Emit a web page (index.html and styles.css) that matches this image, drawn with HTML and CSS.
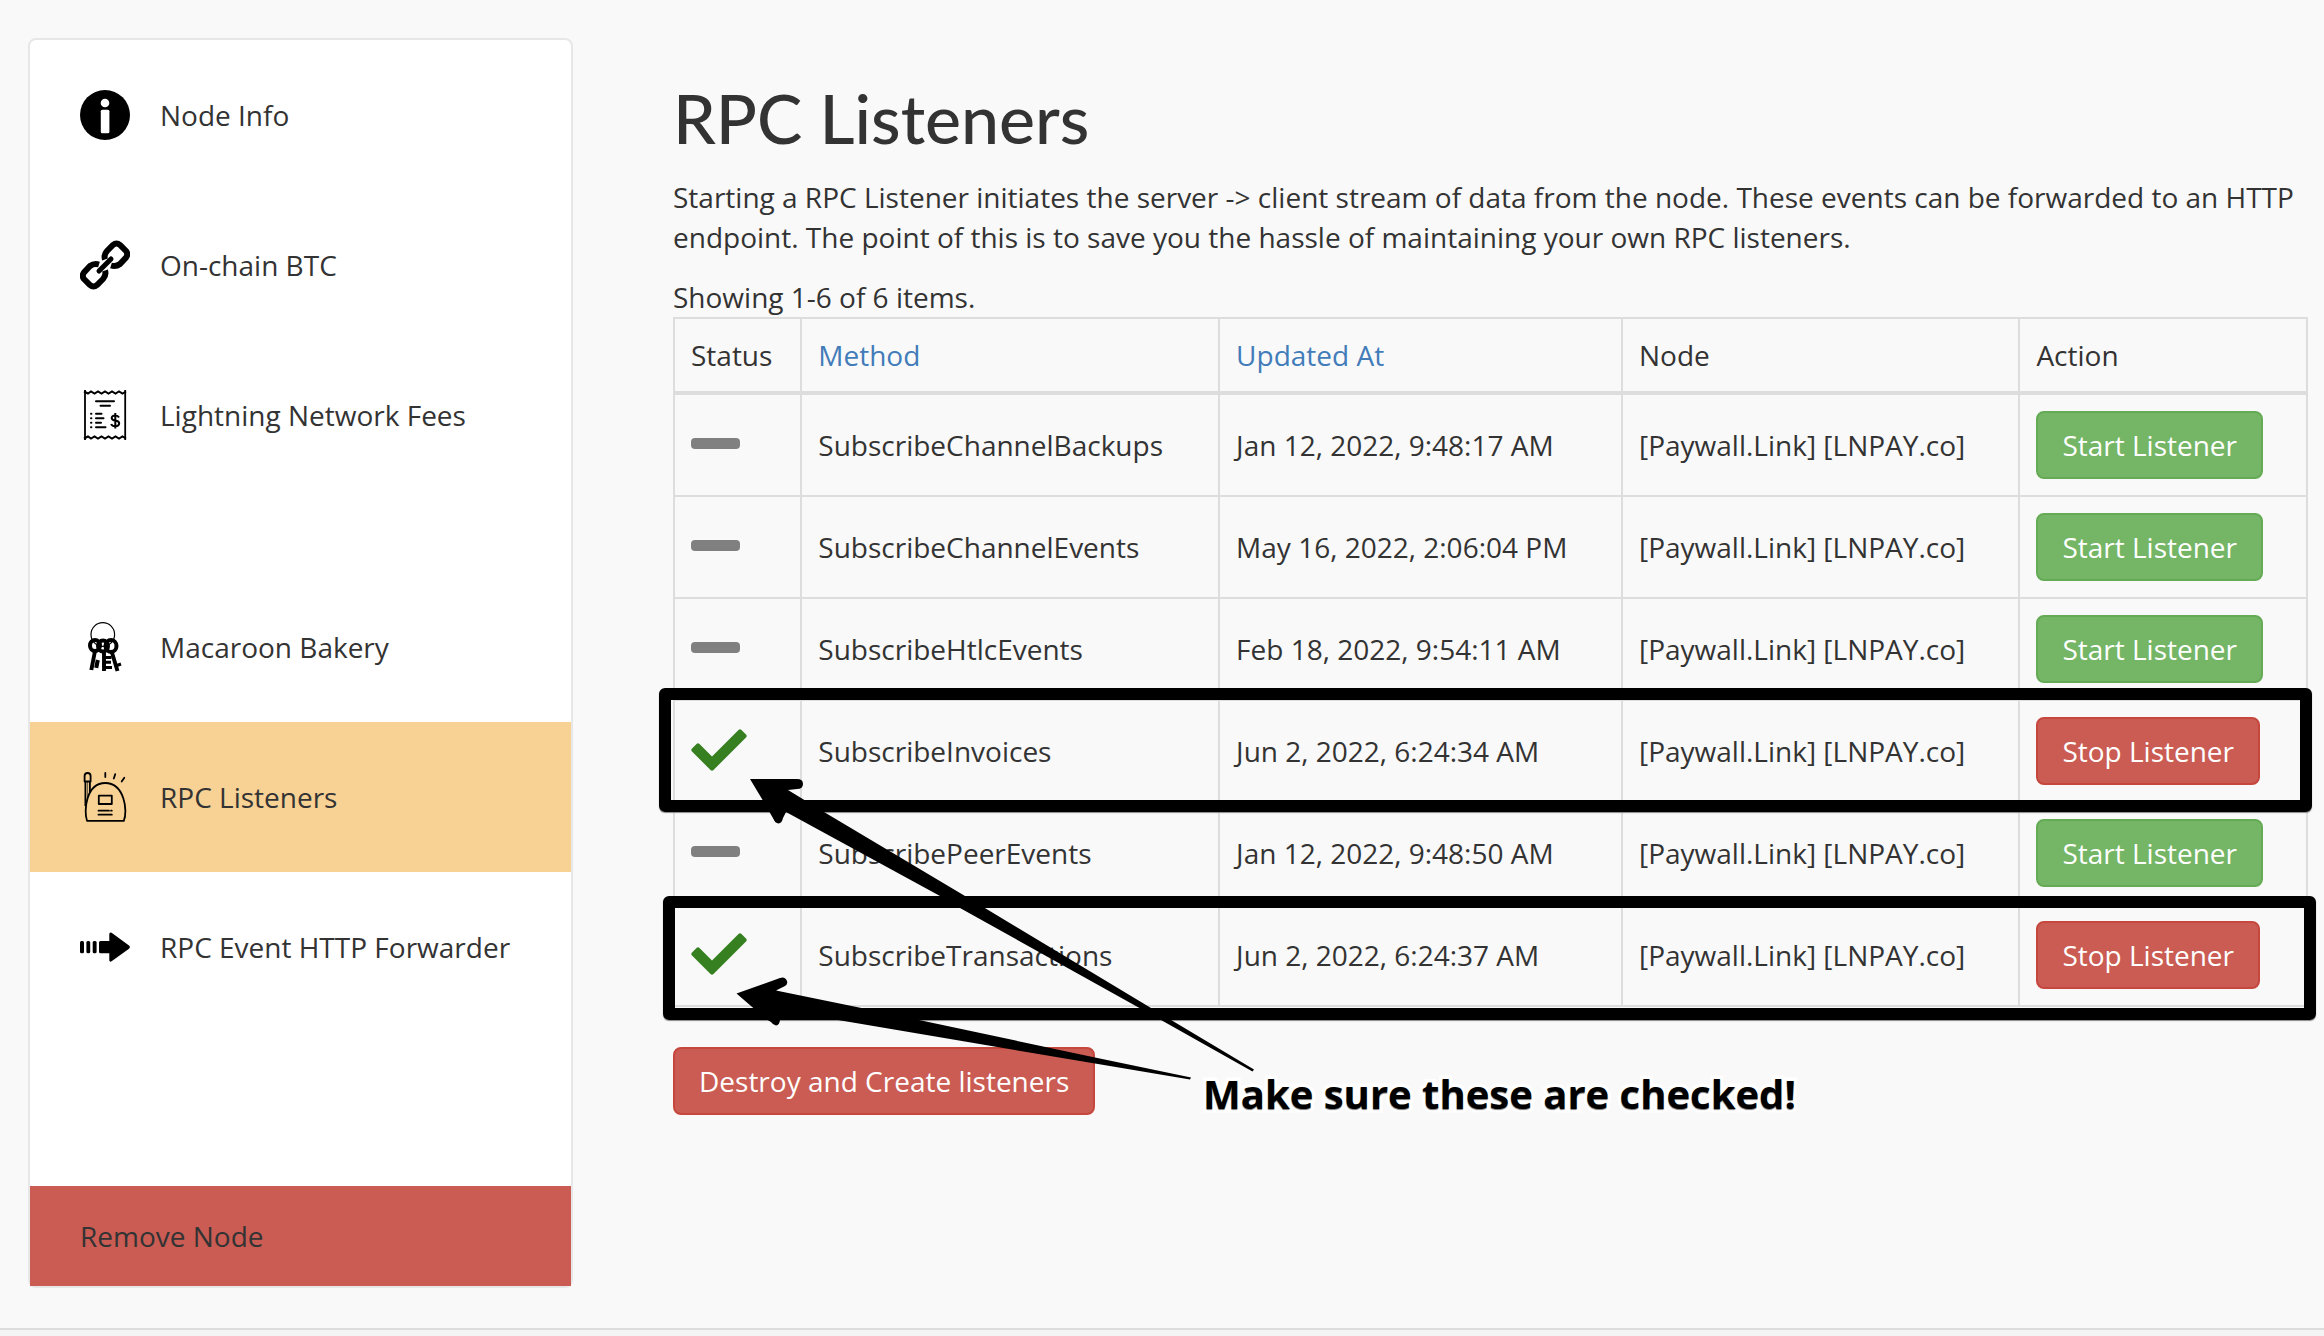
FILE: index.html
```html
<!DOCTYPE html>
<html lang="en">
<head>
<meta charset="utf-8">
<meta name="viewport" content="width=device-width, initial-scale=1">
<title>RPC Listeners</title>
<link rel="stylesheet" href="styles.css">
</head>
<body>
<div class="layout">
  <nav class="sidebar">
    <a class="nav-item" href="#info">
      <svg class="nav-icon" viewBox="0 0 50 50" aria-hidden="true"><circle cx="25" cy="25" r="25"/><g fill="#fff"><circle cx="25" cy="13" r="4.3"/><rect x="20.8" y="19.8" width="8.6" height="23.4" rx="1.5"/></g></svg>
      Node Info
    </a>
    <a class="nav-item" href="#onchain">
      <svg class="nav-icon" viewBox="0 0 50 50" aria-hidden="true"><g fill="none" stroke="#000" stroke-width="6"><path d="M25 19.500Q23.500 15 27 11L33 5Q36.500 2 40 5L46 11Q48.500 14 46 17.500L40 24Q36 27 31 25.500"/><path transform="rotate(180 25 25)" d="M25 19.500Q23.500 15 27 11L33 5Q36.500 2 40 5L46 11Q48.500 14 46 17.500L40 24Q36 27 31 25.500"/><path d="M31 19L19 31" stroke-width="5" stroke-linecap="round"/></g></svg>
      On-chain BTC
    </a>
    <a class="nav-item nav-item-spaced" href="#fees">
      <svg class="nav-icon" viewBox="0 0 50 50" aria-hidden="true"><g fill="none" stroke="#000" stroke-width="2"><path d="M5 0V50M45.200 0V50" stroke-width="1.800"/><path d="M4 1.500L8 3.500L11 1.500L14.500 3.500L18 1.500L21.500 3.500L25 1.500L28.500 3.500L32 1.500L35.500 3.500L39 1.500L42.500 3.500L46 1.500M4 48.500L8 46.500L11 48.500L14.500 46.500L18 48.500L21.500 46.500L25 48.500L28.500 46.500L32 48.500L35.500 46.500L39 48.500L42.500 46.500L46 48.500"/><path d="M16 11.300H34M20.500 15.700H30M16 23.800H21.500M16 28.300H23.500M16 32.800H21M16 37.300H25.500M11 23.800H11.400M11 28.300H11.400M11 32.800H11.400M11 37.300H11.400" stroke-linecap="round"/><path d="M39 27.500Q38 25.500 35.300 25.500Q31.500 25.500 31.700 28.200Q32 30.300 35.300 30.600Q39.200 31 39.200 33.500Q39 36.200 35.300 36.200Q32 36.200 31.200 34M35.300 23V38.500"/></g></svg>
      Lightning Network Fees
    </a>
    <a class="nav-item" href="#macaroons">
      <svg class="nav-icon" viewBox="0 0 50 50" aria-hidden="true"><g fill="none" stroke="#000"><circle cx="22.800" cy="12.500" r="11.800" stroke-width="1.200"/><g stroke-width="4"><ellipse cx="15" cy="23.500" rx="5" ry="5.500"/><ellipse cx="23" cy="24" rx="5" ry="5.500"/><ellipse cx="31" cy="24" rx="5.500" ry="6"/></g><path d="M15 29L11.300 48M24 29V49M31.500 29L37.500 49" stroke-width="3.900"/><path d="M15 41.500L19 42.300" stroke-width="8"/><path d="M24 35.500H31.500M24 40.300H31M24 45.500H32M35.500 44L41 42" stroke-width="3"/></g></svg>
      Macaroon Bakery
    </a>
    <a class="nav-item nav-item-active" href="#listeners" aria-current="page">
      <svg class="nav-icon" viewBox="0 0 50 50" aria-hidden="true"><g fill="none" stroke="#000" stroke-width="1.800" stroke-linejoin="round"><path d="M7 48.800C3.500 39 6 11 25.200 11C44.500 11 48 39 43.800 48.800Z"/><path d="M4.600 9.500V4Q4.600 1 7.600 1Q10.600 1 10.600 4V9.500ZM5.400 9.500V34M9.900 9.500V21"/><path d="M7.600 10V25" stroke-width=".6"/><path d="M18.800 23.700H31.800V32H18.800Z"/><path d="M18.500 38.700H29M31 38.700H31.800M18.500 42.700H31.800M25.300 1V5M35.200 2.200L33.800 6.500M44.300 5.800L41.700 9.600" stroke-linecap="round"/></g></svg>
      RPC Listeners
    </a>
    <a class="nav-item nav-item-last" href="#forwarder">
      <svg class="nav-icon" viewBox="0 0 50 50" aria-hidden="true"><rect y="19" width="4" height="12.300" rx="1.500"/><rect x="6.400" y="19" width="3.800" height="12.300" rx="1.500"/><rect x="12.700" y="19" width="3.900" height="12.300" rx="1.500"/><path d="M20.500 19H29.300V12Q29.500 9.700 31.600 10.800L49 23.500Q50.800 25 49 26.800L31.600 39.300Q29.500 40.500 29.300 38.300V31.300H20.500Q19 31.300 19 29.800V20.500Q19 19 20.500 19Z"/></svg>
      RPC Event HTTP Forwarder
    </a>
    <a class="nav-item nav-item-danger" href="#remove">Remove Node</a>
  </nav>

  <main class="content">
    <h1 class="title">RPC Listeners</h1>
    <p class="intro">Starting a RPC Listener initiates the server -&gt; client stream of data from the node. These events can be forwarded to an HTTP endpoint. The point of this is to save you the hassle of maintaining your own RPC listeners.</p>
    <div class="summary">Showing 1-6 of 6 items.</div>
    <table class="grid">
      <thead>
        <tr><th>Status</th><th><a href="#method">Method</a></th><th><a href="#updated">Updated At</a></th><th>Node</th><th>Action</th></tr>
      </thead>
      <tbody>
        <tr>
          <td><svg class="status" viewBox="0 0 56 46" role="img" aria-label="Stopped"><rect class="dash" y="16" width="49" height="11" rx="4"/></svg></td>
          <td>SubscribeChannelBackups</td><td>Jan 12, 2022, 9:48:17 AM</td><td>[Paywall.Link] [LNPAY.co]</td>
          <td><button class="btn btn-success" type="button">Start Listener</button></td>
        </tr>
        <tr>
          <td><svg class="status" viewBox="0 0 56 46" role="img" aria-label="Stopped"><rect class="dash" y="16" width="49" height="11" rx="4"/></svg></td>
          <td>SubscribeChannelEvents</td><td>May 16, 2022, 2:06:04 PM</td><td>[Paywall.Link] [LNPAY.co]</td>
          <td><button class="btn btn-success" type="button">Start Listener</button></td>
        </tr>
        <tr>
          <td><svg class="status" viewBox="0 0 56 46" role="img" aria-label="Stopped"><rect class="dash" y="16" width="49" height="11" rx="4"/></svg></td>
          <td>SubscribeHtlcEvents</td><td>Feb 18, 2022, 9:54:11 AM</td><td>[Paywall.Link] [LNPAY.co]</td>
          <td><button class="btn btn-success" type="button">Start Listener</button></td>
        </tr>
        <tr>
          <td><svg class="status" viewBox="0 0 56 46" role="img" aria-label="Running"><path class="check" d="M1 20.500L5.500 16Q7 14.500 8.500 16L21 28.500L47.500 2Q49 .5 50.500 2L55 6.500Q56.500 8 55 9.500L22.500 42Q21 43.500 19.500 42L1 23.500Q-.5 22 1 20.500Z"/></svg></td>
          <td>SubscribeInvoices</td><td>Jun 2, 2022, 6:24:34 AM</td><td>[Paywall.Link] [LNPAY.co]</td>
          <td><button class="btn btn-danger" type="button">Stop Listener</button></td>
        </tr>
        <tr>
          <td><svg class="status" viewBox="0 0 56 46" role="img" aria-label="Stopped"><rect class="dash" y="16" width="49" height="11" rx="4"/></svg></td>
          <td>SubscribePeerEvents</td><td>Jan 12, 2022, 9:48:50 AM</td><td>[Paywall.Link] [LNPAY.co]</td>
          <td><button class="btn btn-success" type="button">Start Listener</button></td>
        </tr>
        <tr>
          <td><svg class="status" viewBox="0 0 56 46" role="img" aria-label="Running"><path class="check" d="M1 20.500L5.500 16Q7 14.500 8.500 16L21 28.500L47.500 2Q49 .5 50.500 2L55 6.500Q56.500 8 55 9.500L22.500 42Q21 43.500 19.500 42L1 23.500Q-.5 22 1 20.500Z"/></svg></td>
          <td>SubscribeTransactions</td><td>Jun 2, 2022, 6:24:37 AM</td><td>[Paywall.Link] [LNPAY.co]</td>
          <td><button class="btn btn-danger" type="button">Stop Listener</button></td>
        </tr>
      </tbody>
    </table>
    <button class="btn btn-danger" type="button">Destroy and Create listeners</button>

    <!-- Hand-drawn callouts laid over the table -->
    <div class="frame frame-invoices"></div>
    <div class="frame frame-transactions"></div>
    <svg class="arrows" viewBox="730 770 530 320" aria-hidden="true">
      <path d="M750 779L797 779Q803 779 803 784Q803 789 797 789L788 790L824 812L965 896L1151 1008L1254 1069.500L1252.500 1071.500L1161 1020L960 908L940 896L786 812L783 818Q782 823 778.500 823.500Q775 823 773.500 819L762 799Z"/>
      <path d="M736.500 993.500L780 978Q785 976 787 981Q788 984 785 986L776 990.500L859 1007.500L919 1020L1095 1057.500L1191 1077.500L1190 1079.500L1095 1063.500L838 1020L780 1012V1020Q779.500 1025 776 1025.500Q773 1025 771 1022L766 1019Z"/>
    </svg>
    <p class="callout">Make sure these are checked!</p>
  </main>
</div>
<footer class="footer"></footer>
</body>
</html>
```
FILE: styles.css
```css
*, *::before, *::after { box-sizing: border-box; }

body {
  margin: 0;
  min-height: 100vh;
  display: flex;
  flex-direction: column;
  background: #f9f9f9;
  color: #333;
  font: 28px/40px "Open Sans", "Noto Sans", sans-serif;
}

a { color: #427cb9; text-decoration: none; }

.layout {
  display: grid;
  grid-template-columns: minmax(0, 1fr) minmax(0, 3fr);
  column-gap: 100px;
  align-items: start;
  padding: 38px 16px 40px 28px;
}

.sidebar {
  display: flex;
  flex-direction: column;
  background: #fff;
  border: 2px solid #e7e7e7;
  border-radius: 8px;
}

.nav-item {
  display: flex;
  align-items: center;
  gap: 30px;
  padding: 50px;
  color: #333;
  white-space: nowrap;
}
.nav-item-spaced { margin-bottom: 82px; }
.nav-item-last { margin-bottom: 164px; }
.nav-item-active { background: #f8d295; }
.nav-item-danger { background: #ca5c53; padding: 30px 50px; }
.nav-icon { width: 50px; height: 50px; flex: none; }

.content { position: relative; padding-top: 40px; }

.title {
  margin: 0 0 20px;
  font: 500 68px/79px Lato, sans-serif;
}
.intro { margin: 0 0 20px; }

.grid {
  width: 100%;
  margin-bottom: 40px;
  border-collapse: collapse;
  border: 2px solid #ddd;
}
.grid th, .grid td {
  padding: 16px;
  border: 2px solid #ddd;
  text-align: left;
  vertical-align: middle;
  font-weight: 400;
}
.grid th { border-bottom-width: 4px; }
.status { display: block; width: 56px; height: 46px; }
.dash { fill: #808080; }
.check { fill: #378021; }

.btn {
  display: block;
  padding: 12px 24px;
  border: 2px solid;
  border-radius: 8px;
  color: #fff;
  font: inherit;
  white-space: nowrap;
  cursor: pointer;
}
.btn-success { background: #74b566; border-color: #65ab55; }
.btn-danger { background: #ca5c53; border-color: #c5473d; }

.frame {
  position: absolute;
  height: 124px;
  border: 12px solid #000;
  border-radius: 6px;
  box-shadow: 0 1px 1px #888;
  pointer-events: none;
}
.frame-invoices { top: 650px; left: -14px; right: -4px; }
.frame-transactions { top: 858px; left: -10px; right: -8px; }

.arrows {
  position: absolute;
  top: 732px;
  left: 57px;
  width: 530px;
  height: 320px;
  pointer-events: none;
}

.callout {
  position: absolute;
  top: 1026px;
  left: 530px;
  margin: 0;
  color: #000;
  font-size: 40px;
  font-weight: 700;
  line-height: 60px;
  white-space: nowrap;
  -webkit-text-stroke: 7px #fff;
  paint-order: stroke fill;
  text-shadow: 0 1px 1px #777;
}

.footer {
  flex: 1;
  border-top: 2px solid #ddd;
  background: #f4f4f4;
}
```
